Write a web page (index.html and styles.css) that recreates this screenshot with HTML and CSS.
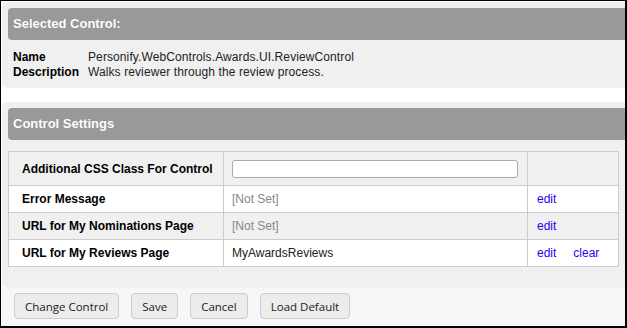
FILE: index.html
```html
<!DOCTYPE html>
<html lang="en">
<head>
    <meta charset="UTF-8">
    <title>Control Settings</title>
    <link rel="stylesheet" href="styles.css">
</head>
<body>
    <div class="frame">
        <div class="panel selected">
            <div class="panel-head">Selected Control:</div>
            <div class="info">
                <div class="info-row"><span class="info-label">Name</span><span>Personify.WebControls.Awards.UI.ReviewControl</span></div>
                <div class="info-row"><span class="info-label">Description</span><span>Walks reviewer through the review process.</span></div>
            </div>
        </div>

        <div class="panel settings">
            <div class="panel-head">Control Settings</div>
            <table class="grid">
                <tr class="alt first">
                    <td class="label">Additional CSS Class For Control</td>
                    <td class="value"><input type="text" class="css-input"></td>
                    <td class="actions"></td>
                </tr>
                <tr>
                    <td class="label">Error Message</td>
                    <td class="value notset">[Not Set]</td>
                    <td class="actions"><a href="#">edit</a></td>
                </tr>
                <tr class="alt">
                    <td class="label">URL for My Nominations Page</td>
                    <td class="value notset">[Not Set]</td>
                    <td class="actions"><a href="#">edit</a></td>
                </tr>
                <tr>
                    <td class="label">URL for My Reviews Page</td>
                    <td class="value">MyAwardsReviews</td>
                    <td class="actions"><a href="#">edit</a><a href="#" class="clear">clear</a></td>
                </tr>
            </table>
        </div>

        <div class="buttons">
            <button>Change Control</button>
            <button>Save</button>
            <button>Cancel</button>
            <button>Load Default</button>
        </div>
    </div>
</body>
</html>
```

FILE: styles.css
```css
html, body {
    margin: 0;
    padding: 0;
    background: #fff;
}
body {
    font-family: "Liberation Sans", Arial, sans-serif;
    font-size: 12px;
    color: #222;
}
.frame {
    width: 627px;
    height: 328px;
    box-sizing: border-box;
    border-top: 1px solid #000;
    border-left: 1px solid #000;
    border-right: 2px solid #000;
    border-bottom: 2px solid #000;
    padding: 1px 0 0 1px;
    overflow: hidden;
}
.panel {
    background: #f0f0f0;
    border-radius: 5px 0 0 5px;
    padding: 6px 0 0 6px;
}
.panel-head {
    background: #999;
    color: #fff;
    font-weight: bold;
    font-size: 13px;
    height: 32px;
    line-height: 32px;
    padding-left: 5px;
    border-radius: 4px 0 0 4px;
    text-shadow: 0 0 1px rgba(0, 0, 0, 0.15);
}
.selected {
    height: 86px;
    box-sizing: border-box;
}
.info {
    padding: 10px 0 0 5px;
}
.info-row {
    display: flex;
    line-height: 15px;
}
.info-row span + span {
    letter-spacing: 0.1px;
}
.info-label {
    width: 75px;
    font-weight: bold;
    color: #000;
}
.settings {
    margin-top: 14px;
    padding-bottom: 21px;
}
.grid {
    margin-top: 11px;
    width: 611px;
    border-collapse: collapse;
    background: #fff;
}
.grid td {
    border: 1px solid #ccc;
    height: 26px;
    padding: 0;
}
.grid tr.first td {
    height: 33px;
}
.grid tr.alt td {
    background: #f0f0f0;
}
.label {
    width: 201px;
    padding-left: 13px !important;
    font-weight: bold;
    color: #000;
}
.value {
    width: 295px;
    padding-left: 8px !important;
}
.notset {
    color: #888;
}
.actions {
    padding-left: 9px !important;
}
.actions a {
    color: #2a00ee;
    text-decoration: none;
}
.actions a.clear {
    margin-left: 17px;
}
.css-input {
    display: block;
    width: 286px;
    height: 18px;
    box-sizing: border-box;
    border: 1px solid #aaa;
    border-radius: 3px;
    background: #fff;
    margin: 0;
    padding: 0 3px;
}
.buttons {
    background: #f7f7f7;
    border-radius: 5px 0 0 0;
    display: flex;
    gap: 12px;
    padding: 5px 0 0 12px;
    height: 39px;
    box-sizing: border-box;
}
.buttons button {
    height: 26px;
    padding: 0 10px;
    border: 1px solid #ccc;
    border-radius: 4px;
    background: #ececec;
    font-family: "Open Sans", "Noto Sans", sans-serif;
    font-size: 11.5px;
    color: #222;
}
```
